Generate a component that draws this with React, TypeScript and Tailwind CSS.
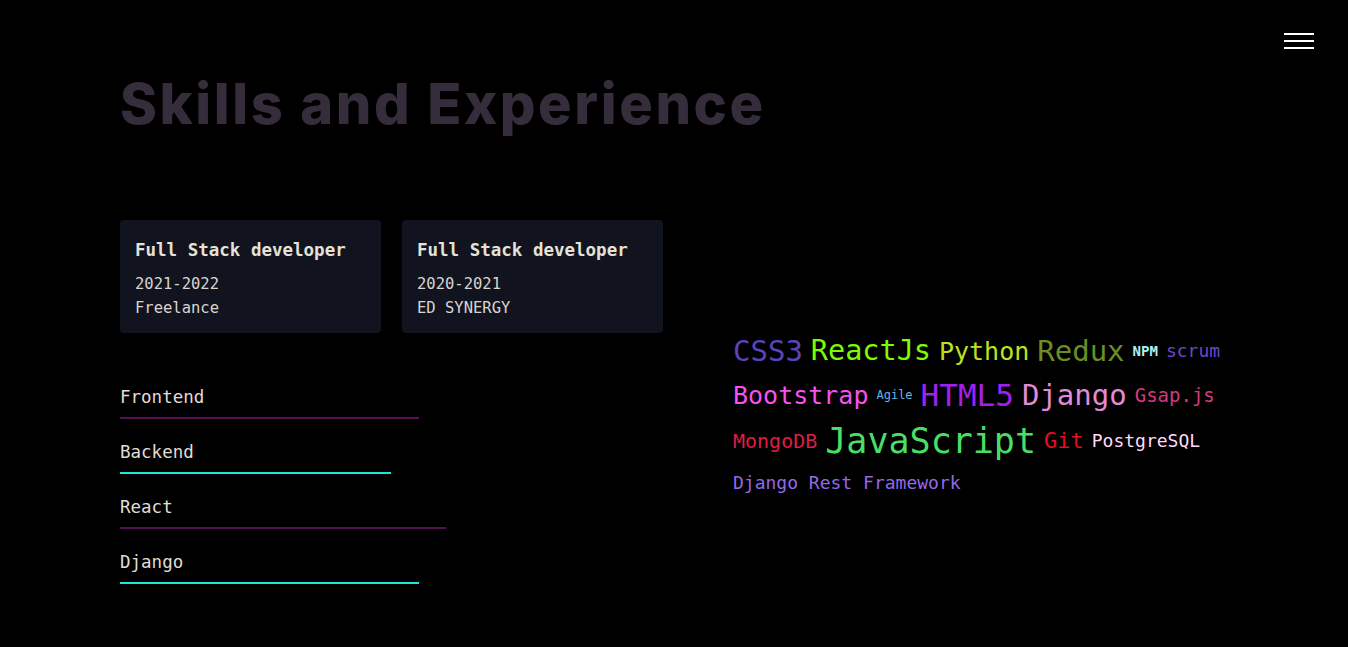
import React from 'react';

const mono = { fontFamily: '"DejaVu Sans Mono", "Liberation Mono", monospace' };

const jobs = [
  { title: 'Full Stack developer', years: '2021-2022', place: 'Freelance' },
  { title: 'Full Stack developer', years: '2020-2021', place: 'ED SYNERGY' },
];

const skills = [
  { name: 'Frontend', width: 'w-[299px]', bar: 'bg-[#5a0f55]' },
  { name: 'Backend', width: 'w-[271px]', bar: 'bg-[#1ee8d4]' },
  { name: 'React', width: 'w-[326px]', bar: 'bg-[#5a0f55]' },
  { name: 'Django', width: 'w-[299px]', bar: 'bg-[#1ee8d4]' },
];

const cloud = [
  {
    h: 'h-[44px]',
    words: [
      { w: 'CSS3', c: 'text-[#5b44bb] text-[29px]' },
      { w: 'ReactJs', c: 'text-[#7cfc00] text-[28.5px]' },
      { w: 'Python', c: 'text-[#bde31c] text-[25px]' },
      { w: 'Redux', c: 'text-[#6b8e23] text-[29px]' },
      { w: 'NPM', c: 'text-[#aff0ee] text-[14px] font-bold' },
      { w: 'scrum', c: 'text-[#6a48cc] text-[18px]' },
    ],
  },
  {
    h: 'h-[44px]',
    words: [
      { w: 'Bootstrap', c: 'text-[#f552f0] text-[25px]' },
      { w: 'Agile', c: 'text-[#62b6e8] text-[12px]' },
      { w: 'HTML5', c: 'text-[#a020f0] text-[31px]' },
      { w: 'Django', c: 'text-[#e08ad8] text-[29px]' },
      { w: 'Gsap.js', c: 'text-[#d23a80] text-[19px]' },
    ],
  },
  {
    h: 'h-[48px]',
    words: [
      { w: 'MongoDB', c: 'text-[#dc1e4a] text-[20px]' },
      { w: 'JavaScript', c: 'text-[#4ade64] text-[35px]' },
      { w: 'Git', c: 'text-[#e3101f] text-[22px]' },
      { w: 'PostgreSQL', c: 'text-[#ffdaf8] text-[18px]' },
    ],
  },
  {
    h: 'h-[36px]',
    words: [{ w: 'Django Rest Framework', c: 'text-[#9468e8] text-[18px]' }],
  },
];

export default function App() {
  return (
    <div className="relative min-h-screen bg-black" style={mono}>
      {/* menu toggle */}
      <button className="absolute right-[34px] top-[33px] flex flex-col gap-[5px]">
        <span className="block h-[2px] w-[30px] bg-white" />
        <span className="block h-[2px] w-[30px] bg-white" />
        <span className="block h-[2px] w-[30px] bg-white" />
      </button>

      <div className="px-[120px] pt-[68px]">
        <h1
          className="text-[56px] font-extrabold leading-[72px] tracking-[2.6px] text-[#352d3b]"
          style={{ fontFamily: 'Inter, "Liberation Sans", sans-serif' }}
        >
          Skills and Experience
        </h1>

        <div className="mt-[80px] flex gap-[70px]">
          <div className="w-[543px]">
            <div className="flex gap-[21px]">
              {jobs.map((j, i) => (
                <div key={i} className="h-[113px] w-[261px] rounded-[4px] bg-[#11131f] px-[15px] pt-[18px]">
                  <h3 className="text-[17.5px] font-bold leading-[24px] text-[#e6e1d6]">{j.title}</h3>
                  <p className="mt-[10px] text-[15.5px] leading-[24px] text-[#d9d5cc]">{j.years}</p>
                  <p className="text-[15.5px] leading-[24px] text-[#d9d5cc]">{j.place}</p>
                </div>
              ))}
            </div>

            <div className="mt-[52px] flex flex-col gap-[21px]">
              {skills.map((s) => (
                <div key={s.name}>
                  <div className="text-[17.5px] leading-[24px] text-[#e2ddd2]">{s.name}</div>
                  <div className={`mt-[8px] h-[2px] ${s.width} ${s.bar}`} />
                </div>
              ))}
            </div>
          </div>

          <div className="pt-[109px]">
            {cloud.map((row, i) => (
              <div key={i} className={`flex items-center gap-x-[8px] ${row.h}`}>
                {row.words.map((t) => (
                  <span key={t.w} className={`leading-none ${t.c}`}>
                    {t.w}
                  </span>
                ))}
              </div>
            ))}
          </div>
        </div>
      </div>
    </div>
  );
}
